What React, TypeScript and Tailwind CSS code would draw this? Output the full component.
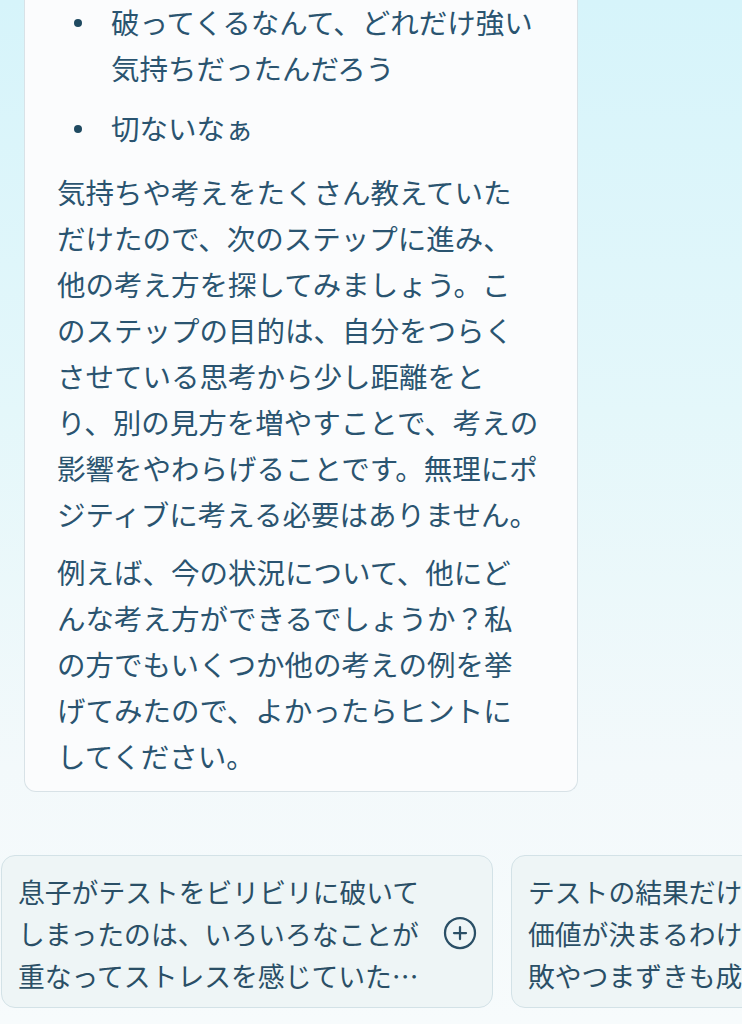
import React from "react";
import { CirclePlus } from "lucide-react";

const Dot = () => (
  <span className="flex w-[54px] shrink-0 items-start">
    <span className="ml-[17px] mt-[20px] h-[8px] w-[8px] rounded-full bg-[#1f4a61]" />
  </span>
);

const Lines = ({ lines }: { lines: string[] }) => (
  <>
    {lines.map((l, i) => (
      <span key={i} className="block whitespace-nowrap">
        {l}
      </span>
    ))}
  </>
);

const Suggestion = ({ lines }: { lines: string[] }) => (
  <div className="flex h-[153px] w-[492px] shrink-0 items-start rounded-[14px] border border-[#d3e2e7] bg-[#eef5f6] pl-[16px] pr-[14px] pt-[15px]">
    <div className="flex-1 overflow-hidden text-[26.8px] leading-[42px] text-[#2a4f66]">
      <Lines lines={lines} />
    </div>
    <CirclePlus
      size={36}
      strokeWidth={1.5}
      className="mt-[44px] shrink-0 text-[#2a4f66]"
    />
  </div>
);

export default function App() {
  return (
    <div
      className="h-[1024px] w-[742px] overflow-hidden bg-[linear-gradient(180deg,#d6f4fa_0%,#e4f7fa_40%,#f3f9fb_75%,#f7fbfc_100%)] font-['Noto_Sans_CJK_JP','Noto_Sans',sans-serif] text-[#2a5470]"
    >
      <div className="ml-[24px] w-[554px] rounded-b-[12px] border border-t-0 border-[#d8e2e7] bg-[#fbfcfd] pb-[12px] pl-[32px] pr-[16px] text-[28.5px] leading-[46px]">
        <ul className="-mt-px">
          <li className="flex">
            <Dot />
            <span>
              <Lines lines={["破ってくるなんて、どれだけ強い", "気持ちだったんだろう"]} />
            </span>
          </li>
          <li className="mt-[14px] flex">
            <Dot />
            <span>
              <Lines lines={["切ないなぁ"]} />
            </span>
          </li>
        </ul>
        <p className="mt-[18px]">
          <Lines
            lines={[
              "気持ちや考えをたくさん教えていた",
              "だけたので、次のステップに進み、",
              "他の考え方を探してみましょう。こ",
              "のステップの目的は、自分をつらく",
              "させている思考から少し距離をと",
              "り、別の見方を増やすことで、考えの",
              "影響をやわらげることです。無理にポ",
              "ジティブに考える必要はありません。",
            ]}
          />
        </p>
        <p className="mt-[12px]">
          <Lines
            lines={[
              "例えば、今の状況について、他にど",
              "んな考え方ができるでしょうか？私",
              "の方でもいくつか他の考えの例を挙",
              "げてみたので、よかったらヒントに",
              "してください。",
            ]}
          />
        </p>
      </div>

      <div className="mt-[63px] flex gap-[18px] pl-px">
        <Suggestion
          lines={[
            "息子がテストをビリビリに破いて",
            "しまったのは、いろいろなことが",
            "重なってストレスを感じていた…",
          ]}
        />
        <Suggestion
          lines={[
            "テストの結果だけで息子の",
            "価値が決まるわけではないし、失",
            "敗やつまずきも成長の一部だ…",
          ]}
        />
      </div>
    </div>
  );
}
